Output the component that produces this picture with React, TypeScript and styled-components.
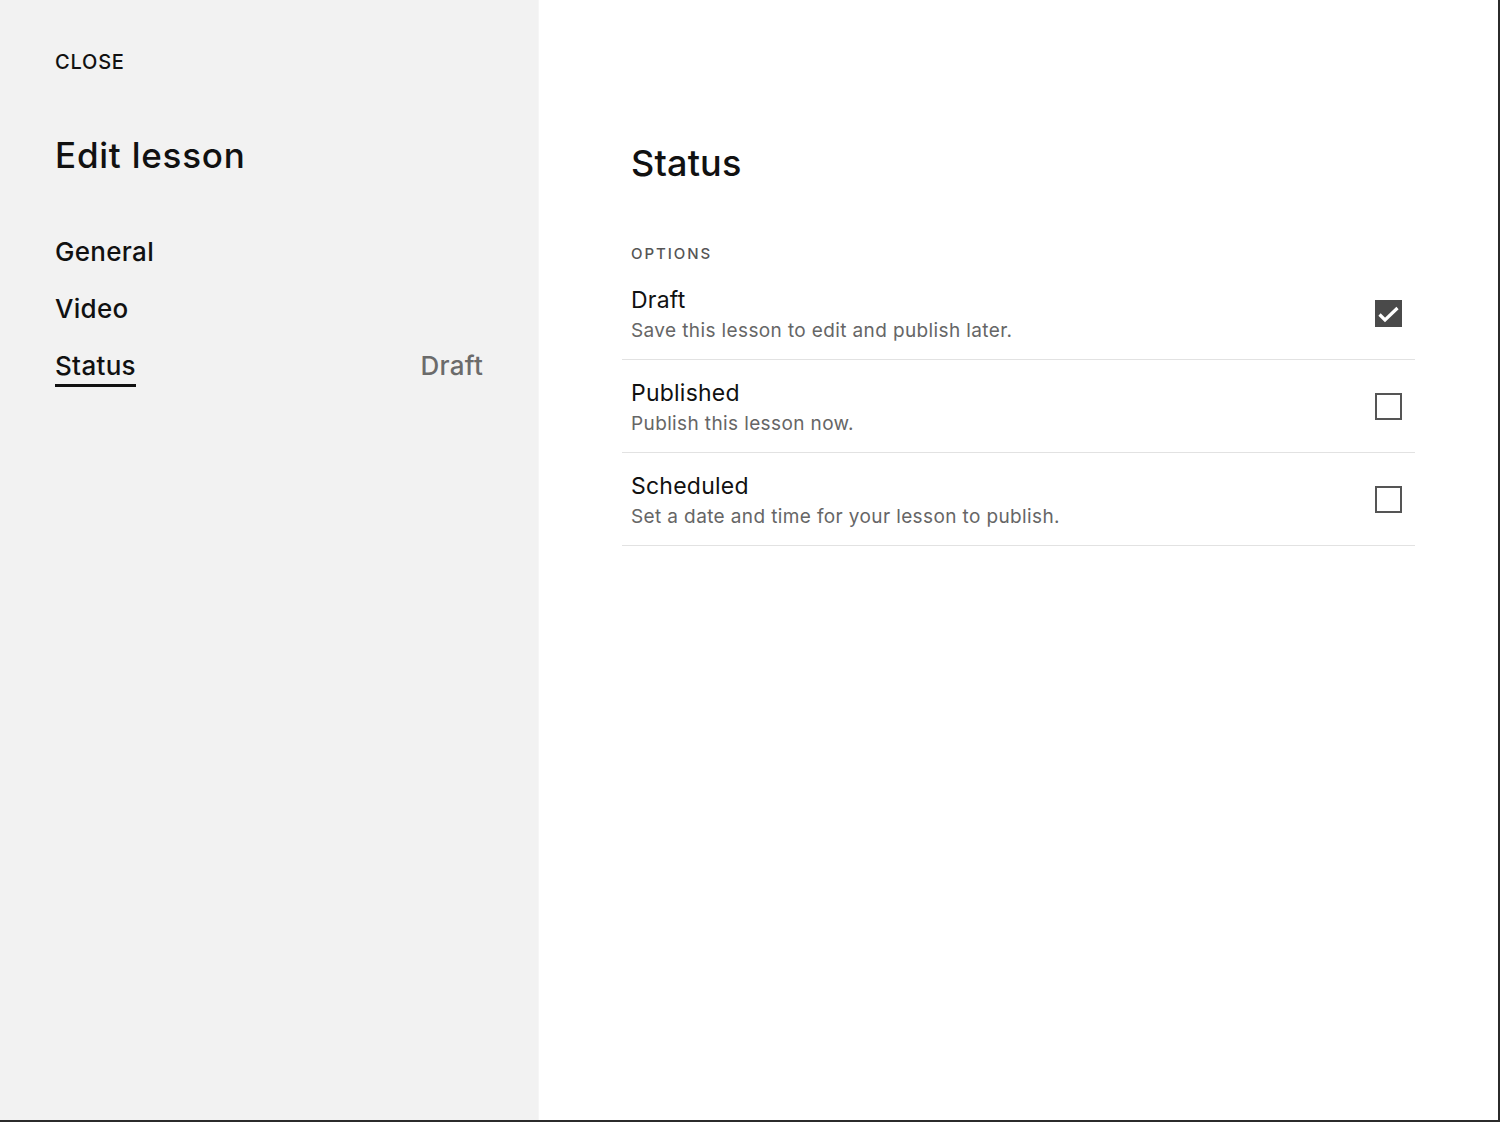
import styled, { createGlobalStyle } from 'styled-components'

const GlobalStyle = createGlobalStyle`
  html, body {
    margin: 0;
    padding: 0;
    background: #2b2b2b;
  }
  body {
    font-family: Inter, "Noto Sans", "Liberation Sans", sans-serif;
    color: #111;
    -webkit-font-smoothing: antialiased;
  }
`

const navItems = [
  { label: 'General' },
  { label: 'Video' },
  { label: 'Status', value: 'Draft', active: true },
]

const options = [
  { title: 'Draft', text: 'Save this lesson to edit and publish later.', checked: true },
  { title: 'Published', text: 'Publish this lesson now.', checked: false },
  { title: 'Scheduled', text: 'Set a date and time for your lesson to publish.', checked: false },
]

export default function App() {
  return (
    <>
      <GlobalStyle />
      <Frame>
        <Sidebar>
          <CloseLink>CLOSE</CloseLink>
          <SideTitle>Edit lesson</SideTitle>
          <Nav>
            {navItems.map((item) => (
              <NavRow key={item.label}>
                <NavLabel $active={item.active}>{item.label}</NavLabel>
                {item.value && <NavValue>{item.value}</NavValue>}
              </NavRow>
            ))}
          </Nav>
        </Sidebar>
        <Main>
          <Header>
            <Heading>Status</Heading>
            <SectionLabel>OPTIONS</SectionLabel>
          </Header>
          <OptionList>
            {options.map((opt) => (
              <OptionRow key={opt.title}>
                <OptionText>
                  <OptionTitle>{opt.title}</OptionTitle>
                  <OptionDesc>{opt.text}</OptionDesc>
                </OptionText>
                <Checkbox $checked={opt.checked}>
                  {opt.checked && (
                    <svg width="23" height="23" viewBox="2 2 23 23">
                      <path d="M4.5 14.5 L10 20 L22.5 8" fill="none" stroke="#fff" strokeWidth="3.2" />
                    </svg>
                  )}
                </Checkbox>
              </OptionRow>
            ))}
          </OptionList>
        </Main>
      </Frame>
    </>
  )
}

const Frame = styled.div`
  display: flex;
  width: 1498px;
  height: 1120px;
  overflow: hidden;
`

const Sidebar = styled.aside`
  width: 539px;
  flex-shrink: 0;
  box-sizing: border-box;
  background: #f2f2f2;
  padding: 50px 55px 0;
  border-right: 1px solid #f6f6f6;
`

const CloseLink = styled.div`
  font-size: 20px;
  line-height: 24px;
  font-weight: 500;
  letter-spacing: 0.04em;
  color: #111;
`

const SideTitle = styled.h1`
  margin: 61px 0 0;
  font-size: 35px;
  line-height: 40px;
  font-weight: 500;
  letter-spacing: 0.022em;
`

const Nav = styled.nav`
  margin-top: 61px;
  display: flex;
  flex-direction: column;
  gap: 25px;
`

const NavRow = styled.div`
  display: flex;
  justify-content: space-between;
  align-items: flex-start;
`

const NavLabel = styled.span<{ $active?: boolean }>`
  display: inline-block;
  font-size: 26px;
  line-height: 32px;
  font-weight: 500;
  letter-spacing: 0.012em;
  color: #111;
  padding-bottom: ${({ $active }) => ($active ? '2px' : '0')};
  border-bottom: ${({ $active }) => ($active ? '3px solid #111' : 'none')};
`

const NavValue = styled.span`
  font-size: 26px;
  line-height: 32px;
  font-weight: 500;
  letter-spacing: 0.01em;
  color: #6b6b6b;
`

const Main = styled.main`
  flex: 1;
  background: #fff;
  padding: 141px 83px 0;
`

const Header = styled.div`
  padding: 0 9px;
`

const Heading = styled.h2`
  margin: 0;
  font-size: 36px;
  line-height: 44px;
  font-weight: 500;
  letter-spacing: 0.005em;
`

const SectionLabel = styled.div`
  margin-top: 59px;
  font-size: 15px;
  line-height: 20px;
  font-weight: 500;
  letter-spacing: 0.13em;
  color: #555;
`

const OptionList = styled.div`
  margin-top: 3px;
`

const OptionRow = styled.div`
  display: flex;
  align-items: center;
  justify-content: space-between;
  padding: 16px 13px 15px 9px;
  border-bottom: 1px solid #e2e2e2;
`

const OptionText = styled.div`
  display: flex;
  flex-direction: column;
  gap: 1px;
`

const OptionTitle = styled.div`
  font-size: 23px;
  line-height: 34px;
  font-weight: 400;
  letter-spacing: 0.01em;
  color: #111;
`

const OptionDesc = styled.div`
  font-size: 19px;
  line-height: 26px;
  font-weight: 400;
  letter-spacing: 0.02em;
  color: #666;
`

const Checkbox = styled.div<{ $checked: boolean }>`
  width: 27px;
  height: 27px;
  box-sizing: border-box;
  display: flex;
  align-items: center;
  justify-content: center;
  border: 2px solid ${({ $checked }) => ($checked ? '#4a4a4a' : '#555')};
  background: ${({ $checked }) => ($checked ? '#4a4a4a' : '#fff')};
`
